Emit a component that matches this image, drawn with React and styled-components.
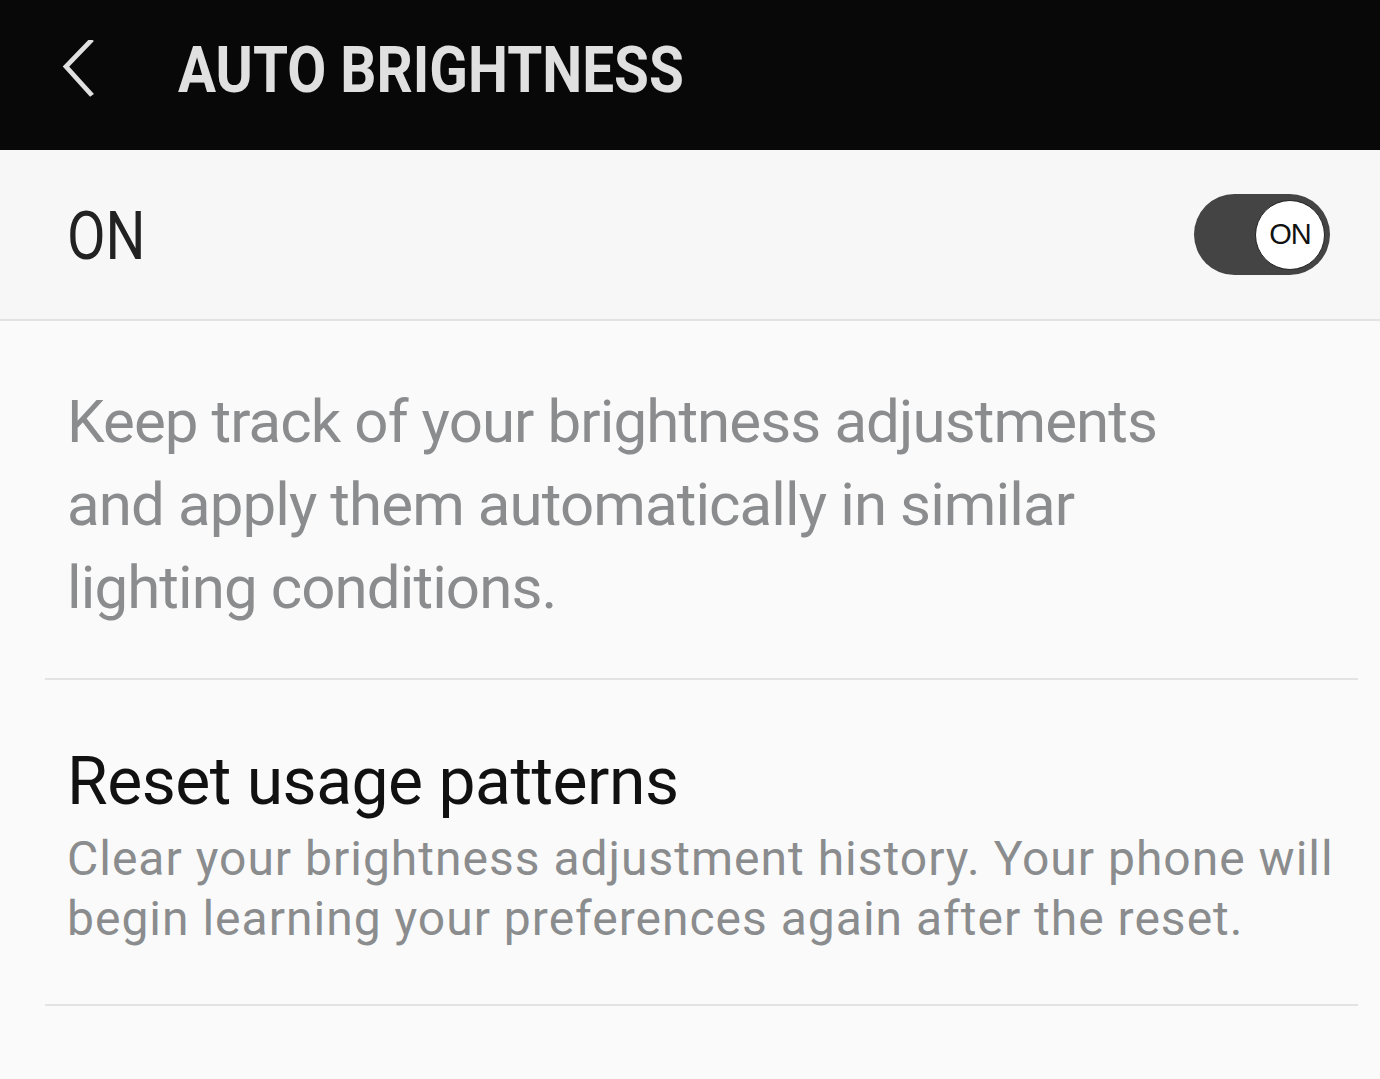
import React from "react";
import styled, { createGlobalStyle } from "styled-components";

const GlobalStyle = createGlobalStyle`
  html, body {
    margin: 0;
    padding: 0;
    background: #fafafa;
  }
  body {
    font-family: Roboto, "Noto Sans", sans-serif;
  }
`;

const Page = styled.div`
  width: 1380px;
  min-height: 1079px;
  background: #fafafa;
  overflow: hidden;
`;

const Header = styled.header`
  height: 150px;
  background: #080808;
  display: flex;
  align-items: center;
  padding-left: 58px;
  box-sizing: border-box;
`;

const BackButton = styled.button`
  width: 40px;
  height: 60px;
  padding: 0;
  border: none;
  background: none;
  display: flex;
  align-items: center;
  justify-content: center;
  margin-right: 80px;
  margin-top: -10px;
`;

const Title = styled.h1`
  margin: 0;
  margin-top: -10px;
  font-family: Roboto, sans-serif;
  font-weight: 700;
  font-size: 64px;
  color: #e0e0e0;
  transform: scaleX(0.885);
  transform-origin: left center;
  white-space: nowrap;
`;

const SwitchRow = styled.div`
  height: 169px;
  background: #f7f7f7;
  border-bottom: 2px solid #e3e3e3;
  display: flex;
  align-items: center;
  justify-content: space-between;
  padding: 0 50px 0 67px;
`;

const SwitchLabel = styled.span`
  font-size: 66px;
  color: #222;
  transform: scaleX(0.85);
  transform-origin: left center;
  margin-top: 4px;
`;

const Toggle = styled.div`
  width: 136px;
  height: 81px;
  border-radius: 41px;
  background: #444;
  display: flex;
  align-items: center;
  justify-content: ${(p) => (p.$on ? "flex-end" : "flex-start")};
  padding: 0 5px;
  box-sizing: border-box;
`;

const Knob = styled.div`
  width: 70px;
  height: 70px;
  border-radius: 50%;
  background: #fff;
  border: 1.5px solid #222;
  box-sizing: border-box;
  display: flex;
  align-items: center;
  justify-content: center;
  font-family: "Liberation Sans", sans-serif;
  font-size: 29px;
  color: #111;
  letter-spacing: -1px;
`;

const Description = styled.p`
  margin: 0 22px 0 45px;
  padding: 59px 0 49px 22px;
  border-bottom: 2px solid #e3e3e3;
  font-size: 60px;
  line-height: 83px;
  letter-spacing: -0.9px;
  color: #8a8c8e;
`;

const Item = styled.div`
  margin: 0 22px 0 45px;
  padding: 62px 0 55px 22px;
  border-bottom: 2px solid #e3e3e3;
`;

const ItemTitle = styled.div`
  font-size: 66px;
  line-height: 80px;
  letter-spacing: -0.5px;
  color: #111;
`;

const ItemSummary = styled.div`
  margin-top: 7px;
  font-size: 48px;
  line-height: 60px;
  letter-spacing: 1px;
  color: #8a8c8e;
  white-space: nowrap;
`;

function ChevronLeft() {
  return (
    <svg width="36" height="60" viewBox="0 0 36 60">
      <polyline
        points="32,4 6,34 32,66"
        transform="translate(0,-4) scale(1,0.9)"
        fill="none"
        stroke="#e0e0e0"
        strokeWidth="5"
      />
    </svg>
  );
}

export default function App() {
  return (
    <Page>
      <GlobalStyle />
      <Header>
        <BackButton aria-label="Back">
          <ChevronLeft />
        </BackButton>
        <Title>AUTO BRIGHTNESS</Title>
      </Header>
      <SwitchRow>
        <SwitchLabel>ON</SwitchLabel>
        <Toggle $on>
          <Knob>ON</Knob>
        </Toggle>
      </SwitchRow>
      <Description>
        Keep track of your brightness adjustments
        <br />
        and apply them automatically in similar
        <br />
        lighting conditions.
      </Description>
      <Item>
        <ItemTitle>Reset usage patterns</ItemTitle>
        <ItemSummary>
          Clear your brightness adjustment history. Your phone will
          <br />
          begin learning your preferences again after the reset.
        </ItemSummary>
      </Item>
    </Page>
  );
}
